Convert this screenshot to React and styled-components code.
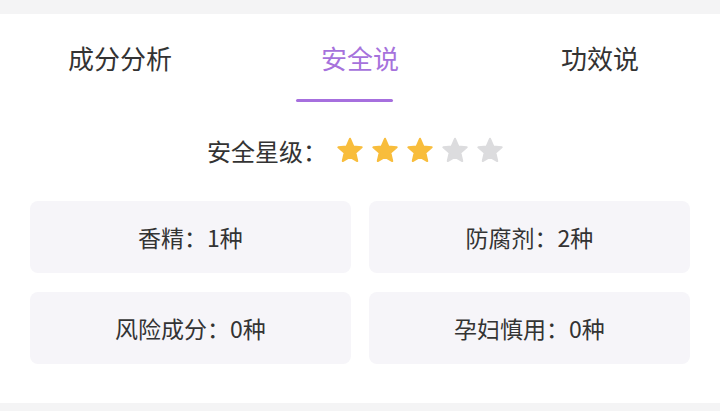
import styled, { createGlobalStyle } from "styled-components"

const GlobalStyle = createGlobalStyle`
    html, body {
        margin: 0;
        padding: 0;
        background: #ffffff;
    }
    body {
        font-family: "Noto Sans CJK SC", "Noto Sans", sans-serif;
        color: #333333;
    }
`

const Page = styled.div`
    width: 720px;
    height: 411px;
    display: flex;
    flex-direction: column;
    background: #ffffff;
    overflow: hidden;
`
const Band = styled.div`
    height: ${props => props.h}px;
    background: #f4f4f5;
    flex-shrink: 0;
`
const Content = styled.div`
    flex: 1;
    display: flex;
    flex-direction: column;
`
const Tabs = styled.div`
    display: grid;
    grid-template-columns: repeat(3, 1fr);
`
const Tab = styled.div`
    display: flex;
    flex-direction: column;
    align-items: center;
    padding-top: 30px;
`
const TabText = styled.span`
    font-size: 26px;
    line-height: 28px;
    color: ${props => props.active ? "#a672dc" : "#333333"};
`
const Underline = styled.div`
    margin-top: 27px;
    margin-right: 32px;
    width: 97px;
    height: 3px;
    border-radius: 2px;
    background: ${props => props.active ? "#a66fde" : "transparent"};
`
const Rating = styled.div`
    margin-top: 28px;
    height: 40px;
    padding-right: 10px;
    display: flex;
    align-items: center;
    justify-content: center;
`
const RatingLabel = styled.span`
    font-size: 24px;
    color: #333333;
    margin-right: 10px;
`
const Stars = styled.div`
    display: flex;
    gap: 9px;
`
const Grid = styled.div`
    margin-top: 31px;
    padding: 0 30px;
    display: grid;
    grid-template-columns: 1fr 1fr;
    column-gap: 18px;
    row-gap: 19px;
`
const Card = styled.div`
    height: 72px;
    border-radius: 8px;
    background: #f6f5f9;
    display: flex;
    align-items: center;
    justify-content: center;
    font-size: 23px;
    color: #333333;
`

const Star = ({ on }) => (
    <svg width="26" height="26" viewBox="0 0 24 24">
        <path
            d="M12 1.6L15.1 8.7 22.8 9.5 17 14.6 18.7 22.2 12 18.3 5.3 22.2 7 14.6 1.2 9.5 8.9 8.7z"
            fill={on ? "#f8bd3c" : "#dcdcde"}
            stroke={on ? "#f8bd3c" : "#dcdcde"}
            strokeWidth="1.8"
            strokeLinejoin="round"
        />
    </svg>
)

const tabs = ["成分分析", "安全说", "功效说"]
const items = ["香精：1种", "防腐剂：2种", "风险成分：0种", "孕妇慎用：0种"]

const App = () => {
    return (
        <Page>
            <GlobalStyle />
            <Band h={14} />
            <Content>
                <Tabs>
                    {tabs.map((t, i) => (
                        <Tab key={t}>
                            <TabText active={i === 1}>{t}</TabText>
                            <Underline active={i === 1} />
                        </Tab>
                    ))}
                </Tabs>
                <Rating>
                    <RatingLabel>安全星级：</RatingLabel>
                    <Stars>
                        {[0, 1, 2, 3, 4].map(n => <Star key={n} on={n < 3} />)}
                    </Stars>
                </Rating>
                <Grid>
                    {items.map(it => <Card key={it}>{it}</Card>)}
                </Grid>
            </Content>
            <Band h={8} />
        </Page>
    )
}

export default App
